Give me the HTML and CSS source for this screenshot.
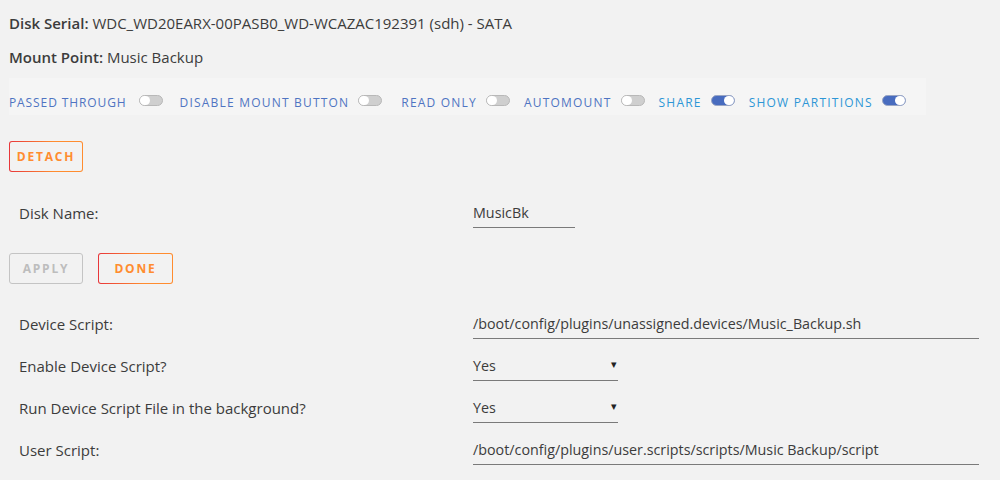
FILE: index.html
```html
<!DOCTYPE html>
<html lang="en">
<head>
    <meta charset="UTF-8">
    <title>Disk Settings</title>
    <link rel="stylesheet" href="styles.css">
</head>
<body>
    <div class="page">
        <p class="meta"><b>Disk Serial:</b> WDC_WD20EARX-00PASB0_WD-WCAZAC192391 (sdh) - SATA</p>
        <p class="meta"><b>Mount Point:</b> Music Backup</p>

        <!-- device switches -->
        <div class="switches">
            <label class="switch-item">Passed Through <span class="switch"></span></label>
            <label class="switch-item">Disable Mount Button <span class="switch"></span></label>
            <label class="switch-item">Read Only <span class="switch"></span></label>
            <label class="switch-item">Automount <span class="switch"></span></label>
            <label class="switch-item on">Share <span class="switch"></span></label>
            <label class="switch-item on">Show Partitions <span class="switch"></span></label>
        </div>

        <div class="actions">
            <button class="btn">Detach</button>
        </div>

        <div class="row">
            <span class="label">Disk Name:</span>
            <span class="field short">MusicBk</span>
        </div>

        <div class="actions tight">
            <button class="btn disabled">Apply</button>
            <button class="btn wide">Done</button>
        </div>

        <!-- scripts -->
        <div class="row">
            <span class="label">Device Script:</span>
            <span class="field long">/boot/config/plugins/unassigned.devices/Music_Backup.sh</span>
        </div>
        <div class="row">
            <span class="label">Enable Device Script?</span>
            <span class="field select">Yes</span>
        </div>
        <div class="row">
            <span class="label">Run Device Script File in the background?</span>
            <span class="field select">Yes</span>
        </div>
        <div class="row">
            <span class="label">User Script:</span>
            <span class="field long">/boot/config/plugins/user.scripts/scripts/Music Backup/script</span>
        </div>
    </div>
</body>
</html>
```

FILE: styles.css
```css
* {
    margin: 0;
    padding: 0;
    box-sizing: border-box;
}

body {
    background: #f2f2f2;
    color: #3c3c3c;
    font-family: "Open Sans", "Noto Sans", sans-serif;
    font-size: 15px;
}

.page {
    padding: 6px 0 0 9px;
}

.meta {
    line-height: 34px;
}

.meta b {
    font-weight: 600;
}

/* switch bar */
.switches {
    display: flex;
    align-items: center;
    width: 917px;
    height: 37px;
    margin-top: 4px;
    padding-top: 12px;
    background: #f5f5f5;
}

.switch-item {
    display: flex;
    align-items: center;
    gap: 9px;
    margin-right: 14px;
    font-size: 12px;
    letter-spacing: 1.2px;
    text-transform: uppercase;
    color: #4f74c2;
}

.switch-item:first-child {
    letter-spacing: 0.9px;
    gap: 12px;
    margin-right: 17px;
}

.switch-item:nth-child(2) {
    margin-right: 19px;
}

.switch-item.on {
    color: #2d96d6;
}

.switch {
    position: relative;
    display: inline-block;
    width: 24px;
    height: 11px;
    margin-bottom: 5px;
    border: 1px solid #b8b8b8;
    border-radius: 6px;
    background: #cfcfcf;
}

.switch::after {
    content: "";
    position: absolute;
    top: 0;
    left: 0;
    width: 10px;
    height: 9px;
    border-radius: 5px;
    background: #fff;
}

.on .switch {
    background: #486cbf;
    border-color: #9aa6c4;
}

.on .switch::after {
    left: auto;
    right: 0;
}

/* buttons */
.actions {
    display: flex;
    gap: 15px;
    margin: 26px 0 20px;
}

.actions.tight {
    margin: 19px 0 19px;
}

.btn {
    width: 74px;
    height: 31px;
    border: 1px solid transparent;
    border-radius: 3px;
    background: linear-gradient(#f2f2f2, #f2f2f2) padding-box,
                linear-gradient(90deg, #e8363a, #ff8c2f 60%) border-box;
    color: #ff8c2f;
    font-family: inherit;
    font-size: 12px;
    font-weight: 700;
    letter-spacing: 1.8px;
    text-transform: uppercase;
    cursor: pointer;
}

.btn.wide {
    width: 75px;
}

.btn.disabled {
    background: #f2f2f2;
    border-color: #c4c4c4;
    color: #bdbdbd;
    cursor: default;
}

/* settings rows */
.row {
    display: flex;
    align-items: center;
    height: 42px;
    padding-left: 10px;
}

.label {
    width: 454px;
}

.field {
    padding: 4px 0 5px;
    border-bottom: 1px solid #7a7a7a;
    font-size: 14.3px;
}

.field.short {
    width: 102px;
}

.field.long {
    width: 506px;
}

.field.select {
    position: relative;
    width: 145px;
}

.field.select::after {
    content: "\25BE";
    position: absolute;
    right: 1px;
    top: 4px;
    font-size: 11px;
    color: #222;
}
```
